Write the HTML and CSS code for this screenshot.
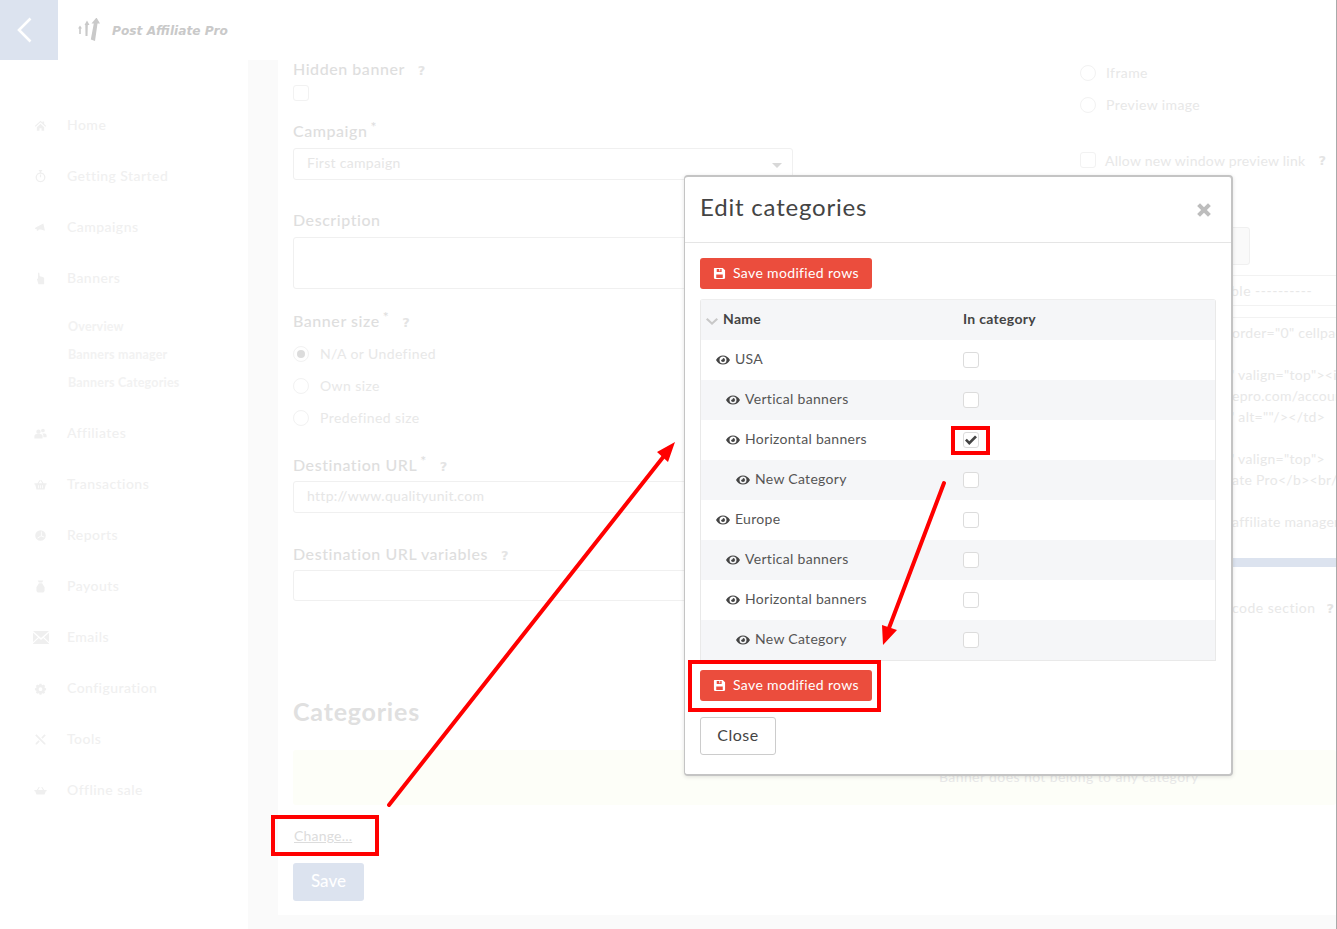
FILE: index.html
```html
<!DOCTYPE html>
<html lang="en">
<head>
<meta charset="utf-8">
<title>Edit categories</title>
<link rel="stylesheet" href="styles.css">
</head>
<body>
<div class="page">
  <header class="topbar">
    <a class="back"><svg width="16" height="26" viewBox="0 0 16 26"><path d="M14.5 1.5 3 13l11.500 11.500" fill="none" stroke="#fff" stroke-width="2.600"/></svg></a>
    <div class="logo">
      <svg width="24" height="24" viewBox="0 0 24 24" fill="#c9c9c9"><path d="M1 10.500 3 7.500 5 10.500H3.800V16H2.200V10.500ZM7.500 7 10 2.500 12.500 7H10.800L10.500 18H8.500L8.300 7ZM14.500 5.500 19.500-.5 23 5.500H20.500L18 23 13.800 21.500 16.800 5.500Z"/></svg>
      <span class="logo-text">Post Affiliate Pro</span>
    </div>
  </header>
  <div class="body">
    <nav class="side">
      <a class="nav-item"><svg class="ni" viewBox="0 0 16 16"><path d="M8 2 1 8.500 2 9.500 8 4l6 5.500 1-1-2.500-2.300V3h-2v1.400ZM3.500 10v4.500h3.200v-3h2.600v3h3.200V10L8 5.800Z"/></svg>Home</a>
      <a class="nav-item"><svg class="ni" viewBox="0 0 16 16"><path d="M6 0h4v1.500H8.800V3A6 6 0 1 1 7.200 3V1.500H6ZM8 4.500a4.500 4.500 0 1 0 0 9 4.500 4.500 0 0 0 0-9ZM7.300 5.500h1.400V9H7.300Z"/></svg>Getting Started</a>
      <a class="nav-item"><svg class="ni" viewBox="0 0 16 16"><path d="M11.500 3 13.500 12 8.500 10.500H6L5 12H3.500V10L1 9.500 2 8Z"/></svg>Campaigns</a>
      <a class="nav-item"><svg class="ni" viewBox="0 0 16 16"><path d="M5 1h1.500L7 5l1 .5 3 .5 1.500 1.500V15H5.500L3.500 8.500 5 8Z"/></svg>Banners</a>
      <div class="sub">
        <a class="sub-item">Overview</a>
        <a class="sub-item">Banners manager</a>
        <a class="sub-item">Banners Categories</a>
      </div>
      <a class="nav-item"><svg class="ni" viewBox="0 0 16 16"><path d="M5.500 3a2.700 2.700 0 1 1 0 5.400 2.700 2.700 0 0 1 0-5.400ZM11 2a2.300 2.300 0 1 1 0 4.600A2.300 2.300 0 0 1 11 2ZM.5 14v-3c0-1.500 1.500-2.500 3-2.500h4c1.500 0 3 1 3 2.500v3ZM11.500 12.500V10.500c0-1-.5-1.700-1.300-2.500h2.800c1.500 0 2.500 1 2.500 2.300v2.200Z"/></svg>Affiliates</a>
      <a class="nav-item"><svg class="ni" viewBox="0 0 16 16"><path d="M.5 6.500h3.700L7 2.500 8 3.200 5.800 6.500h4.400L8 3.200 9 2.500l2.800 4h3.700V8h-1L13 14H3L1.500 8h-1ZM5 9v3.500h1V9Zm2.500 0v3.500h1V9ZM10 9v3.500h1V9Z"/></svg>Transactions</a>
      <a class="nav-item"><svg class="ni" viewBox="0 0 16 16"><path d="M8 1.500A6.500 6.500 0 1 1 8 14.500 6.500 6.500 0 0 1 8 1.500ZM8.500 3V8L4 11l.8.800L8.500 9l4 1.500.4-1L9.500 8V3Z"/></svg>Reports</a>
      <a class="nav-item"><svg class="ni" viewBox="0 0 16 16"><path d="M4.500.5h7L10 3H6ZM6 4h4l3 5v4.500l-1.500 2h-7L3 13.500V9Z"/></svg>Payouts</a>
      <a class="nav-item"><svg class="ni ni-wide" viewBox="0 0 16 13"><path d="M0 0h16L8 7ZM0 1.800 5 6.300 0 11ZM16 1.800V11L11 6.300ZM5.800 7 8 9l2.200-2L16 12.500V13H0V12.500Z"/></svg>Emails</a>
      <a class="nav-item"><svg class="ni" viewBox="0 0 16 16"><path fill-rule="evenodd" d="M6.800 2h2.400l.3 1.500 1.200.5 1.300-.8 1.700 1.700-.8 1.300.5 1.200 1.500.3v2.400l-1.500.3-.5 1.200.8 1.300-1.700 1.700-1.300-.8-1.200.5-.3 1.500H6.800l-.3-1.500-1.200-.5-1.300.8-1.700-1.700.8-1.300-.5-1.200-1.500-.3V7.700l1.500-.3.500-1.200-.8-1.300 1.700-1.700 1.300.8 1.200-.5ZM8 6.500a2.300 2.300 0 1 0 0 4.600 2.300 2.300 0 0 0 0-4.600Z"/></svg>Configuration</a>
      <a class="nav-item"><svg class="ni" viewBox="0 0 16 16"><path d="M1.500 3 3 1.500 14 12.500l.3 1.800-1.800-.3ZM9 5.500l3-3 1-1 1.500 1.500-1 1-3 3ZM5.500 9 2 12.500V14h1.500L7 10.500Z"/></svg>Tools</a>
      <a class="nav-item"><svg class="ni" viewBox="0 0 16 16"><path d="M.5 7.500h3L6 3.500l1 .6L5 7.500h6L9 4.100l1-.6 2.500 4h3V9h-1L13 13H3L1.500 9h-1Z"/></svg>Offline sale</a>
    </nav>
    <main class="main">
      <div class="card">
        <div class="cols">
          <div class="col-left">
            <div class="lbl lbl-first">Hidden banner<span class="help">?</span></div>
            <span class="chk chk-faint"></span>
            <div class="lbl lbl-campaign">Campaign<sup class="req">*</sup></div>
            <div class="field field-select">First campaign<span class="caret"></span></div>
            <div class="lbl lbl-gap">Description</div>
            <div class="field field-area"></div>
            <div class="lbl lbl-gap2">Banner size<sup class="req">*</sup><span class="help">?</span></div>
            <div class="radios">
              <div class="radio-row"><span class="radio radio-on"></span>N/A or Undefined</div>
              <div class="radio-row"><span class="radio"></span>Own size</div>
              <div class="radio-row"><span class="radio"></span>Predefined size</div>
            </div>
            <div class="lbl lbl-gap3">Destination URL<sup class="req">*</sup><span class="help">?</span></div>
            <div class="field field-input">http://www.qualityunit.com</div>
            <div class="lbl lbl-gap4">Destination URL variables<span class="help">?</span></div>
            <div class="field field-last"></div>
          </div>
          <div class="col-right">
            <div class="radio-row radio-row-top"><span class="radio"></span>Iframe</div>
            <div class="radio-row"><span class="radio"></span>Preview image</div>
            <div class="allow"><span class="chk chk-faint"></span>Allow new window preview link<span class="help">?</span></div>
            <div class="r-btn"></div>
            <div class="code-head">ble ----------</div>
            <div class="code">
              <div class="cl cl-a">order="0" cellpadding</div>
              <div class="cl cl-b cl-gap">" valign="top"&gt;&lt;img</div>
              <div class="cl cl-c">epro.com/account</div>
              <div class="cl cl-b">" alt=""/&gt;&lt;/td&gt;</div>
              <div class="cl cl-b cl-gap">" valign="top"&gt;</div>
              <div class="cl cl-c">ate Pro&lt;/b&gt;&lt;br/&gt;</div>
              <div class="cl cl-c cl-gap">affiliate manager</div>
              <div class="scroll"></div>
            </div>
            <div class="code-foot">code section<span class="help">?</span></div>
          </div>
        </div>
        <h2 class="cat-title">Categories</h2>
        <div class="strip">Banner does not belong to any category</div>
        <div class="change"><a class="change-link">Change...</a></div>
        <button class="save-bg">Save</button>
      </div>
    </main>
  </div>

  <section class="modal">
    <div class="modal-head">
      <h3 class="modal-title">Edit categories</h3>
      <svg class="x" viewBox="0 0 14 14"><path d="M1 3.500 3.500 1 7 4.500 10.500 1 13 3.500 9.500 7 13 10.500 10.500 13 7 9.500 3.500 13 1 10.500 4.500 7Z"/></svg>
    </div>
    <div class="modal-body">
      <button class="btn-red"><svg class="sv" viewBox="0 0 14 14"><path fill-rule="evenodd" d="M1.500 1H10.500L13 3.500V11.500A1.500 1.500 0 0 1 11.500 13H2.500A1.500 1.500 0 0 1 1 11.500V1.500ZM4 2.200V5.500H9.300V2.200H7.800V4.500H6.800V2.200ZM3.500 8V11.800H10.500V8Z"/></svg>Save modified rows</button>
      <div class="grid">
        <div class="row row-head"><div class="c1"><svg class="chev" viewBox="0 0 12 8"><path d="M1.500 1 6 5.300 10.500 1 12 2.500 6 8 0 2.500Z"/></svg>Name</div><div class="c2">In category</div></div>
        <div class="row"><div class="c1 d0"><svg class="eye" viewBox="0 0 14 10"><use href="#e"/></svg>USA</div><div class="c2"><span class="chk"></span></div></div>
        <div class="row row-alt"><div class="c1 d1"><svg class="eye" viewBox="0 0 14 10"><use href="#e"/></svg>Vertical banners</div><div class="c2"><span class="chk"></span></div></div>
        <div class="row"><div class="c1 d1"><svg class="eye" viewBox="0 0 14 10"><use href="#e"/></svg>Horizontal banners</div><div class="c2"><span class="chk"><svg class="tick" viewBox="0 0 12 10"><path d="M0 5.500 1.800 3.700 4.300 6.200 10 .5 12 2.300 4.300 10Z"/></svg></span></div></div>
        <div class="row row-alt"><div class="c1 d2"><svg class="eye" viewBox="0 0 14 10"><use href="#e"/></svg>New Category</div><div class="c2"><span class="chk"></span></div></div>
        <div class="row"><div class="c1 d0"><svg class="eye" viewBox="0 0 14 10"><use href="#e"/></svg>Europe</div><div class="c2"><span class="chk"></span></div></div>
        <div class="row row-alt"><div class="c1 d1"><svg class="eye" viewBox="0 0 14 10"><use href="#e"/></svg>Vertical banners</div><div class="c2"><span class="chk"></span></div></div>
        <div class="row"><div class="c1 d1"><svg class="eye" viewBox="0 0 14 10"><use href="#e"/></svg>Horizontal banners</div><div class="c2"><span class="chk"></span></div></div>
        <div class="row row-alt"><div class="c1 d2"><svg class="eye" viewBox="0 0 14 10"><use href="#e"/></svg>New Category</div><div class="c2"><span class="chk"></span></div></div>
      </div>
      <button class="btn-red btn-red-2"><svg class="sv" viewBox="0 0 14 14"><path fill-rule="evenodd" d="M1.500 1H10.500L13 3.500V11.500A1.500 1.500 0 0 1 11.500 13H2.500A1.500 1.500 0 0 1 1 11.500V1.500ZM4 2.200V5.500H9.300V2.200H7.800V4.500H6.800V2.200ZM3.500 8V11.800H10.500V8Z"/></svg>Save modified rows</button>
      <button class="btn-close">Close</button>
    </div>
  </section>

  <svg class="annot" viewBox="0 0 1337 929" width="1337" height="929">
    <defs>
      <symbol id="e" viewBox="0 0 14 10"><path fill-rule="evenodd" d="M0 5C1.700 2 4 .5 7 .5S12.300 2 14 5C12.300 8 10 9.500 7 9.500S1.700 8 0 5ZM7 1.500A3.500 3.500 0 1 0 7 8.500 3.500 3.500 0 0 0 7 1.500ZM7 3A2 2 0 1 1 5 5C5.800 5 7 4.200 7 3Z"/></symbol>
    </defs>
    <g fill="none" stroke="#f00" stroke-width="4">
      <rect x="273" y="817" width="104" height="37"/>
      <rect x="953" y="428" width="35" height="25"/>
      <rect x="690" y="662" width="189" height="48"/>
    </g>
    <g stroke="#f00" stroke-width="4" stroke-linecap="round">
      <path d="M389 805 664 456"/>
      <path d="M944 483 889 628"/>
    </g>
    <path d="M675 442 668 462 657 452ZM883 645 882 625 897 630Z" fill="#f00"/>
  </svg>
</div>
</body>
</html>
```
FILE: styles.css
```css
* { box-sizing: border-box; }
html, body { margin: 0; padding: 0; height: 100%; overflow: hidden; }
body { font-family: Lato, "Open Sans", sans-serif; background: #fff; color: #e4e4e4; }
.page { position: relative; width: 1337px; height: 929px; border-right: 1px solid #aaa; overflow: hidden; }

.topbar { height: 60px; display: flex; align-items: center; background: #fff; }
.back { width: 58px; height: 60px; background: #dce3ef; display: flex; align-items: center; justify-content: center; padding-right: 10px; }
.logo { display: flex; align-items: center; margin-left: 19px; gap: 11px; }
.logo-text { font: italic bold 12.200px "DejaVu Sans", sans-serif; color: #c9c9c9; margin-top: 2px; }

.body { display: flex; height: 869px; }
.side { width: 248px; padding-top: 40px; background: #fff; flex: none; }
.nav-item { height: 51px; padding: 0 0 2px 34px; display: flex; align-items: center; font-size: 14px; font-weight: 500; color: #f0f0f0; letter-spacing: .45px; }
.ni { width: 13px; height: 13px; margin: 2px 20px 0 0; fill: #efefef; flex: none; }
.ni-wide { width: 16px; margin-left: -1px; margin-right: 18px; }
.sub { padding: 9px 0 11px 68px; }
.sub-item { display: block; height: 28px; line-height: 28px; font-size: 12.500px; font-weight: 700; color: #f2f2f2; letter-spacing: .2px; }

.main { flex: 1; background: #fafafa; padding: 0 0 14px 30px; min-width: 0; }
.card { height: 855px; background: #fff; padding: 0 0 0 15px; overflow: hidden; }
.cols { display: flex; height: 631px; }
.col-left { width: 500px; flex: none; }
.col-right { margin-left: 287px; width: 256px; flex: none; font-size: 14px; color: #e8e8e8; overflow: hidden; }

.lbl { font-size: 16px; font-weight: 500; color: #dedede; line-height: 20px; letter-spacing: .55px; }
.lbl-first { line-height: 18px; }
.lbl-campaign { margin-top: 21px; line-height: 18px; padding-bottom: 2px; }
.lbl-gap { margin-top: 31px; line-height: 18px; padding-bottom: 2px; }
.lbl-gap2 { margin-top: 23px; line-height: 18px; padding-bottom: 2px; }
.lbl-gap3 { margin-top: 21px; }
.lbl-gap4 { margin-top: 31px; }
.help { font: bold 13px "DejaVu Sans", sans-serif; color: #e4e4e4; margin-left: 13px; letter-spacing: 0; }
.req { font-size: 14px; line-height: 0; margin-left: 3px; vertical-align: 5px; color: #ddd; }
.chk { display: flex; align-items: center; justify-content: center; width: 16px; height: 16px; border: 1px solid #dcdcdc; border-radius: 3px; background: #fff; flex: none; }
.chk-faint { border-color: #f2f2f2; margin-top: 7px; }
.field { border: 1px solid #f0f0f0; border-radius: 3px; margin-top: 6px; padding: 0 0 3px 13px; font-size: 14px; color: #e6e6e6; display: flex; align-items: center; position: relative; letter-spacing: .3px; }
.field-select { height: 32px; }
.field-area { height: 52px; }
.field-input { height: 32px; }
.field-last { height: 31px; }
.caret { position: absolute; right: 10px; top: 14px; border: 5px solid transparent; border-top-color: #d8d8d8; border-bottom: 0; }
.radios { margin-top: 6px; }
.radio-row { height: 32px; padding-bottom: 2px; display: flex; align-items: center; font-size: 14px; color: #e8e8e8; letter-spacing: .4px; }
.radio-row-top { margin-top: -3px; }
.radio { width: 16px; height: 16px; border-radius: 50%; border: 1px solid #f2f2f2; margin: 2px 11px 0 0; flex: none; display: flex; align-items: center; justify-content: center; }
.radio-on::after { content: ""; width: 8px; height: 8px; border-radius: 50%; background: #dcdcdc; }
.col-right .radio { margin-right: 10px; }
.allow { display: flex; align-items: center; margin-top: 30px; height: 18px; letter-spacing: .25px; white-space: nowrap; }
.allow .chk { margin: 0 9px 0 0; }
.allow .help { margin-left: 13px; }
.r-btn { width: 170px; height: 38px; margin-top: 58px; border: 1px solid #f0f0f0; border-radius: 3px; background: #fafafa; }
.code-head { margin: 10px 0 0; height: 31px; line-height: 29px; border-top: 1px solid #f2f2f2; border-bottom: 1px solid #f2f2f2; padding-left: 151px; letter-spacing: .5px; white-space: nowrap; }
.code { margin-top: 11px; height: 251px; border-top: 1px solid #f2f2f2; padding-left: 152px; white-space: nowrap; position: relative; letter-spacing: .3px; }
.cl { height: 21px; line-height: 21px; }
.cl-a { margin-top: 4px; }
.cl-gap { margin-top: 21px; }
.cl-b { margin-left: -3px; }
.scroll { height: 9px; background: #dce3ef; margin-top: 26px; }
.code-foot { margin-top: 31px; padding-left: 152px; white-space: nowrap; letter-spacing: .5px; line-height: 18px; }
.code-foot .help { margin-left: 11px; }

.cat-title { margin: 0; height: 42px; font-size: 25px; line-height: 40px; font-weight: 700; color: #e0e0e0; letter-spacing: .8px; }
.strip { margin-top: 17px; height: 55px; background: #fdfef8; padding-left: 646px; font-size: 14px; line-height: 54px; color: #e8e8e8; white-space: nowrap; border-radius: 3px; letter-spacing: .4px; }
.change { height: 58px; padding: 20px 0 0 1px; }
.change-link { font-size: 14px; color: #dcdcdc; text-decoration: underline; letter-spacing: .2px; }
.save-bg { display: block; width: 71px; height: 38px; padding: 0 0 4px; background: #dce3ef; border: 0; border-radius: 3px; color: #fff; font: 500 17px Lato, sans-serif; }

.modal { position: absolute; left: 684px; top: 175px; width: 549px; height: 601px; background: #fff; border: 2px solid #c4c4c4; border-left-width: 1px; border-radius: 4px; color: #444; box-shadow: 0 1px 4px rgba(0,0,0,.12); }
.modal-head { height: 66px; border-bottom: 1px solid #e5e5e5; display: flex; align-items: center; justify-content: space-between; padding: 0 19px 7px 15px; }
.modal-title { margin: 0; font-size: 24px; font-weight: 400; color: #444; letter-spacing: .8px; }
.x { width: 16px; height: 16px; fill: #bdbdbd; margin-top: 8px; }
.modal-body { padding: 15px 14px 0 15px; }
.btn-red { display: flex; align-items: center; width: 172px; height: 31px; background: #eb4d3d; color: #fff; border: 0; border-radius: 3px; padding: 0 0 2px 13px; font: 400 14px Lato, sans-serif; letter-spacing: .35px; white-space: nowrap; }
.btn-red-2 { margin-top: 9px; }
.sv { width: 13px; height: 13px; fill: #fff; margin: 2px 7px 0 0; flex: none; }
.grid { margin-top: 10px; width: 516px; height: 362px; border: 1px solid #e9e9e9; border-top-color: #eee; border-radius: 3px 3px 0 0; }
.row { height: 40px; display: flex; align-items: center; background: #fff; font-size: 14px; color: #555; letter-spacing: .3px; }
.row-alt { background: #f5f6f8; }
.row-head { background: #f5f6f8; font-weight: 700; color: #444; letter-spacing: .3px; padding-bottom: 4px; }
.c1 { width: 262px; padding-bottom: 4px; display: flex; align-items: center; flex: none; }
.c2 { flex: 1; display: flex; align-items: center; }
.row-head .c1 { padding: 0 0 0 5px; }
.chev { width: 12px; height: 8px; fill: #c8c8c8; margin: 6px 5px 0 0; }
.d0 { padding-left: 15px; }
.d1 { padding-left: 25px; }
.d2 { padding-left: 35px; }
.eye { width: 14px; height: 10px; fill: #444; margin: 4px 5px 0 0; flex: none; }
.tick { width: 12px; height: 10px; fill: #444; }
.btn-close { display: block; margin-top: 16px; width: 76px; height: 38px; padding: 0 0 3px; background: #fff; border: 1px solid #ccc; border-radius: 3px; font: 400 16px Lato, sans-serif; color: #444; letter-spacing: .5px; }

.annot { position: absolute; left: 0; top: 0; pointer-events: none; }
```
